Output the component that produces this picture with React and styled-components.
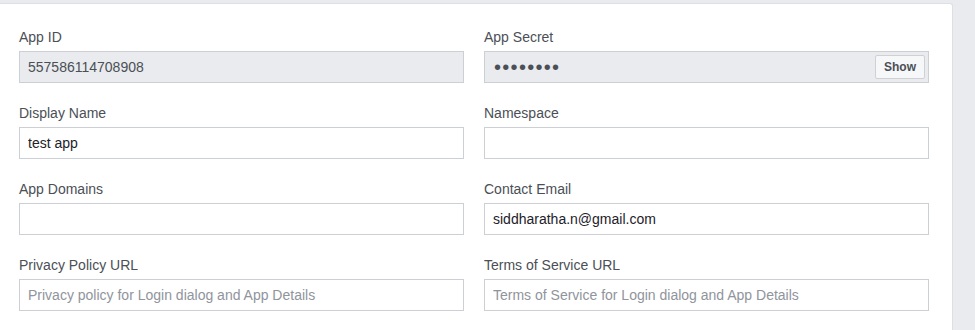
import React from "react";
import styled, { createGlobalStyle } from "styled-components";

const GlobalStyle = createGlobalStyle`
  body {
    margin: 0;
    background: #e9ebee;
    font-family: "Liberation Sans", Arial, sans-serif;
  }
`;

const Card = styled.div`
  box-sizing: border-box;
  width: 954px;
  margin: 3px 0 0 -1px;
  background: #fff;
  border: 1px solid #dddfe2;
  border-bottom: none;
  border-radius: 0 3px 0 0;
  padding: 24px 23px 24px 19px;
  display: grid;
  grid-template-columns: 445px 445px;
  column-gap: 20px;
  row-gap: 21px;
`;

const Field = styled.div`
  display: flex;
  flex-direction: column;
`;

const Label = styled.label`
  font-size: 14px;
  line-height: 18px;
  color: #4b4f56;
  margin-bottom: 5px;
`;

const Input = styled.input`
  box-sizing: border-box;
  height: 32px;
  width: 100%;
  margin: 0;
  padding: 0 8px;
  border: 1px solid #ccd0d5;
  border-radius: 0;
  background: ${(p) => (p.disabled ? "#e9ebee" : "#fff")};
  color: ${(p) => (p.disabled ? "#4b4f56" : "#1d2129")};
  font-family: "Liberation Sans", Arial, sans-serif;
  font-size: 14px;
  outline: none;

  &::placeholder {
    color: #90949c;
  }

  &:disabled {
    -webkit-text-fill-color: #4b4f56;
    opacity: 1;
  }
`;

const SecretBox = styled.div`
  box-sizing: border-box;
  height: 32px;
  display: flex;
  align-items: center;
  justify-content: space-between;
  padding: 0 3px 0 9px;
  border: 1px solid #ccd0d5;
  background: #e9ebee;
`;

const Dots = styled.span`
  font-family: "Liberation Sans", Arial, sans-serif;
  font-size: 20px;
  letter-spacing: 1.3px;
  color: #4b4f56;
  line-height: 1;
`;

const ShowButton = styled.button`
  box-sizing: border-box;
  height: 24px;
  width: 50px;
  padding: 0;
  border: 1px solid #ced0d4;
  border-radius: 2px;
  background: #f6f7f9;
  color: #4b4f56;
  font-family: "Liberation Sans", Arial, sans-serif;
  font-weight: bold;
  font-size: 12px;
`;

const fields = [
  { label: "App ID", value: "557586114708908", disabled: true },
  { label: "App Secret", secret: true },
  { label: "Display Name", value: "test app" },
  { label: "Namespace", value: "" },
  { label: "App Domains", value: "" },
  { label: "Contact Email", value: "siddharatha.n@gmail.com" },
  {
    label: "Privacy Policy URL",
    placeholder: "Privacy policy for Login dialog and App Details",
  },
  {
    label: "Terms of Service URL",
    placeholder: "Terms of Service for Login dialog and App Details",
  },
];

export default function App() {
  return (
    <>
      <GlobalStyle />
      <Card>
        {fields.map((f) => (
          <Field key={f.label}>
            <Label>{f.label}</Label>
            {f.secret ? (
              <SecretBox>
                <Dots>••••••••</Dots>
                <ShowButton type="button">Show</ShowButton>
              </SecretBox>
            ) : (
              <Input
                readOnly
                disabled={f.disabled}
                defaultValue={f.value}
                placeholder={f.placeholder}
              />
            )}
          </Field>
        ))}
      </Card>
    </>
  );
}
